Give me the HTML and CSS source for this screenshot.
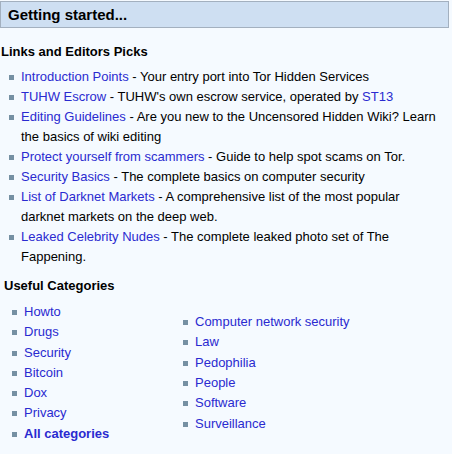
FILE: index.html
```html
<!DOCTYPE html>
<html lang="en">
<head>
    <meta charset="UTF-8">
    <meta name="viewport" content="width=device-width, initial-scale=1.0">
    <title>Getting started</title>
    <link rel="stylesheet" href="styles.css">
</head>
<body>
    <div class="box-head">Getting started...</div>

    <h3 class="section-title">Links and Editors Picks</h3>
    <ul class="picks">
        <li><a href="#">Introduction Points</a> - Your entry port into Tor Hidden Services</li>
        <li><a href="#">TUHW Escrow</a> - TUHW's own escrow service, operated by <a href="#">ST13</a></li>
        <li><a href="#">Editing Guidelines</a> - Are you new to the Uncensored Hidden Wiki? Learn the basics of wiki editing</li>
        <li><a href="#">Protect yourself from scammers</a> - Guide to help spot scams on Tor.</li>
        <li><a href="#">Security Basics</a> - The complete basics on computer security</li>
        <li><a href="#">List of Darknet Markets</a> - A comprehensive list of the most popular darknet markets on the deep web.</li>
        <li><a href="#">Leaked Celebrity Nudes</a> - The complete leaked photo set of The Fappening.</li>
    </ul>

    <h3 class="section-title cats-title">Useful Categories</h3>
    <div class="categories">
        <ul class="cat-list">
            <li><a href="#">Howto</a></li>
            <li><a href="#">Drugs</a></li>
            <li><a href="#">Security</a></li>
            <li><a href="#">Bitcoin</a></li>
            <li><a href="#">Dox</a></li>
            <li><a href="#">Privacy</a></li>
            <li><a href="#"><b>All categories</b></a></li>
        </ul>
        <ul class="cat-list">
            <li><a href="#">Computer network security</a></li>
            <li><a href="#">Law</a></li>
            <li><a href="#">Pedophilia</a></li>
            <li><a href="#">People</a></li>
            <li><a href="#">Software</a></li>
            <li><a href="#">Surveillance</a></li>
        </ul>
    </div>
</body>
</html>
```

FILE: styles.css
```css
body {
    font-family: "Liberation Sans", Arial, sans-serif;
    font-size: 13px;
    background-color: #f5faff;
    color: #000;
    margin: 0;
    padding: 1px 0 0;
}

a {
    color: #2a2ad0;
    text-decoration: none;
}

/* Blue header bar */
.box-head {
    width: 440px;
    height: 25px;
    line-height: 25px;
    padding-left: 7px;
    background-color: #cedff2;
    border: 1px solid #a3b0bf;
    font-size: 15px;
    font-weight: bold;
}

.section-title {
    font-size: 13px;
    font-weight: bold;
    margin: 14px 0 0 1px;
    line-height: 20px;
}

ul {
    list-style: none;
    margin: 0;
}

li {
    position: relative;
    line-height: 20px;
}

/* square bullet */
li::before {
    content: "";
    position: absolute;
    left: -12px;
    top: 8px;
    width: 5px;
    height: 5px;
    background-color: #7590a3;
}

.picks {
    padding: 5px 12px 0 21px;
}

.cats-title {
    margin: 9px 0 0 4px;
}

/* two-column category table */
.categories {
    display: grid;
    grid-template-columns: 171px auto;
    align-items: center;
    padding-top: 6px;
}

.cat-list {
    padding-left: 24px;
}

.cat-list li {
    line-height: 20.3px;
}
```
